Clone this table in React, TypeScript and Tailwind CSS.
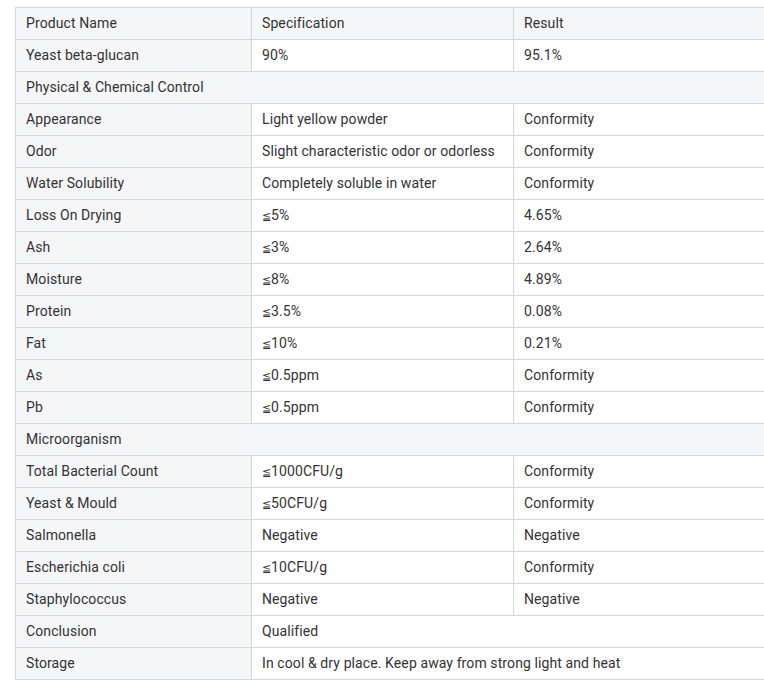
import React from 'react';

type Row =
  | { kind: 'section'; label: string }
  | { kind: 'span'; label: string; value: string }
  | { kind: 'row'; label: string; spec: string; result: string; header?: boolean };

const rows: Row[] = [
  { kind: 'row', label: 'Product Name', spec: 'Specification', result: 'Result', header: true },
  { kind: 'row', label: 'Yeast beta-glucan', spec: '90%', result: '95.1%' },
  { kind: 'section', label: 'Physical & Chemical Control' },
  { kind: 'row', label: 'Appearance', spec: 'Light yellow powder', result: 'Conformity' },
  { kind: 'row', label: 'Odor', spec: 'Slight characteristic odor or odorless', result: 'Conformity' },
  { kind: 'row', label: 'Water Solubility', spec: 'Completely soluble in water', result: 'Conformity' },
  { kind: 'row', label: 'Loss On Drying', spec: '≦5%', result: '4.65%' },
  { kind: 'row', label: 'Ash', spec: '≦3%', result: '2.64%' },
  { kind: 'row', label: 'Moisture', spec: '≦8%', result: '4.89%' },
  { kind: 'row', label: 'Protein', spec: '≦3.5%', result: '0.08%' },
  { kind: 'row', label: 'Fat', spec: '≦10%', result: '0.21%' },
  { kind: 'row', label: 'As', spec: '≦0.5ppm', result: 'Conformity' },
  { kind: 'row', label: 'Pb', spec: '≦0.5ppm', result: 'Conformity' },
  { kind: 'section', label: 'Microorganism' },
  { kind: 'row', label: 'Total Bacterial Count', spec: '≦1000CFU/g', result: 'Conformity' },
  { kind: 'row', label: 'Yeast & Mould', spec: '≦50CFU/g', result: 'Conformity' },
  { kind: 'row', label: 'Salmonella', spec: 'Negative', result: 'Negative' },
  { kind: 'row', label: 'Escherichia coli', spec: '≦10CFU/g', result: 'Conformity' },
  { kind: 'row', label: 'Staphylococcus', spec: 'Negative', result: 'Negative' },
  { kind: 'span', label: 'Conclusion', value: 'Qualified' },
  { kind: 'span', label: 'Storage', value: 'In cool & dry place. Keep away from strong light and heat' },
];

const cell = 'border border-[#d3d5d9] h-8 px-[10px] py-0 text-left align-middle whitespace-nowrap';

// the ≦ sign comes from a fallback font that is wider than the original's
const Spec = ({ text }: { text: string }) =>
  text.startsWith('≦') ? (
    <>
      <span className="text-[11px]">≦</span>
      {text.slice(1)}
    </>
  ) : (
    <>{text}</>
  );

export default function App() {
  return (
    <div className="w-[764px] h-[684px] overflow-hidden bg-white pl-[15px] pt-[7px] font-['Roboto','Liberation_Sans',sans-serif] text-[14px] tracking-[0.1px] text-[#333]">
      <table className="w-[800px] border-collapse table-fixed">
        <colgroup>
          <col className="w-[236px]" />
          <col className="w-[262px]" />
          <col />
        </colgroup>
        <tbody>
          {rows.map((row, i) => {
            if (row.kind === 'section') {
              return (
                <tr key={i}>
                  <td colSpan={3} className={`${cell} bg-[#f5f6f8]`}>{row.label}</td>
                </tr>
              );
            }
            if (row.kind === 'span') {
              return (
                <tr key={i}>
                  <td className={`${cell} bg-[#f5f6f8]`}>{row.label}</td>
                  <td colSpan={2} className={`${cell} bg-white`}>{row.value}</td>
                </tr>
              );
            }
            const bg = row.header ? 'bg-[#f5f6f8]' : 'bg-white';
            return (
              <tr key={i}>
                <td className={`${cell} bg-[#f5f6f8]`}>{row.label}</td>
                <td className={`${cell} ${bg}`}><Spec text={row.spec} /></td>
                <td className={`${cell} ${bg}`}>{row.result}</td>
              </tr>
            );
          })}
        </tbody>
      </table>
    </div>
  );
}
